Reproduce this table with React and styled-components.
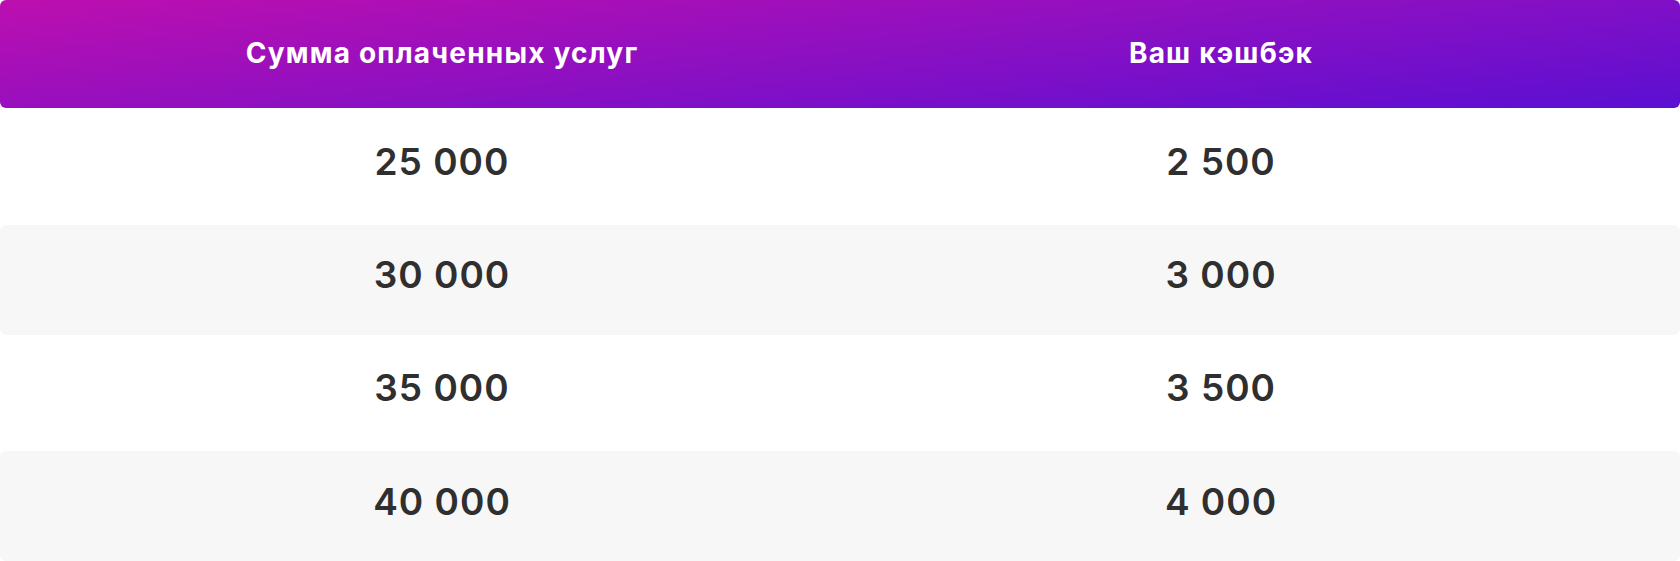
import React from "react";
import styled, { createGlobalStyle } from "styled-components";

const GlobalStyle = createGlobalStyle`
  html, body {
    margin: 0;
    padding: 0;
    background: #ffffff;
  }
  body {
    font-family: "Inter", "Noto Sans", sans-serif;
  }
`;

const rows = [
  { paid: "25 000", cashback: "2 500" },
  { paid: "30 000", cashback: "3 000" },
  { paid: "35 000", cashback: "3 500" },
  { paid: "40 000", cashback: "4 000" },
];

const App = () => {
  return (
    <>
      <GlobalStyle />
      <Table>
        <HeaderRow>
          <HeaderCell>Сумма оплаченных услуг</HeaderCell>
          <HeaderCell>Ваш кэшбэк</HeaderCell>
        </HeaderRow>
        {rows.map((row, i) => (
          <Row key={row.paid} striped={i % 2 === 1}>
            <Cell>{row.paid}</Cell>
            <Cell>{row.cashback}</Cell>
          </Row>
        ))}
      </Table>
    </>
  );
};

export default App;

const Table = styled.div`
  width: 1680px;
  display: grid;
  grid-auto-rows: 110px;
  grid-template-rows: 108px;
  row-gap: 3.25px;
`;

const Columns = styled.div`
  display: grid;
  grid-template-columns: 884px 674px 1fr;
  align-items: center;
  border-radius: 6px;
`;

const HeaderRow = styled(Columns)`
  background: linear-gradient(174deg, #bd0faf 0%, #8c10c2 50%, #5b0fd2 100%);
`;

const Row = styled(Columns).withConfig({
  shouldForwardProp: (prop) => prop !== "striped",
})`
  background: ${(p) => (p.striped ? "#f7f7f7" : "#ffffff")};
`;

const HeaderCell = styled.div`
  text-align: center;
  color: #ffffff;
  font-size: 28px;
  font-weight: 700;
  letter-spacing: 1.2px;
  padding-bottom: 2px;
`;

const Cell = styled.div`
  text-align: center;
  color: #2f2f2f;
  font-size: 37px;
  font-weight: 600;
  letter-spacing: 1px;
  padding-bottom: 10px;
`;
